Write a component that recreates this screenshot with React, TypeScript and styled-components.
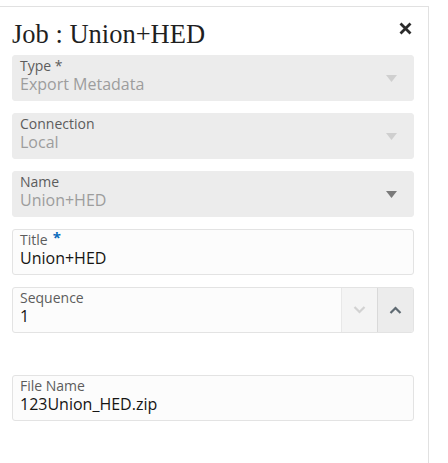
import * as React from "react";
import styled, { createGlobalStyle } from "styled-components";

const GlobalStyle = createGlobalStyle`
  html, body {
    margin: 0;
    padding: 0;
    background: #ffffff;
  }
  body {
    font-family: "Open Sans", "Noto Sans", sans-serif;
  }
`;

const Panel = styled.div`
  box-sizing: border-box;
  margin-top: 6px;
  width: 429px;
  min-height: 457px;
  border-top: 1px solid #e1e1e1;
  border-right: 1px solid #e1e1e1;
  padding: 12px 14px 0 12px;
`;

const Header = styled.div`
  display: flex;
  align-items: flex-start;
  justify-content: space-between;
  margin-bottom: 6px;
`;

const Heading = styled.h1`
  margin: 0;
  font-family: "Liberation Serif", "Times New Roman", serif;
  font-weight: 400;
  font-size: 26.5px;
  line-height: 30px;
  color: #1f1f1f;
`;

const CloseButton = styled.button`
  display: flex;
  align-items: center;
  justify-content: center;
  width: 18px;
  height: 18px;
  margin-top: 0;
  padding: 0;
  border: none;
  background: transparent;
  cursor: pointer;
`;

const Form = styled.div`
  display: flex;
  flex-direction: column;
  gap: 12px;
`;

const Field = styled.div<{ $disabled?: boolean; $spaceBefore?: number }>`
  box-sizing: border-box;
  display: flex;
  align-items: stretch;
  height: 46px;
  margin-top: ${(p) => p.$spaceBefore || 0}px;
  border-radius: 3px;
  border: 1px solid ${(p) => (p.$disabled ? "#ececec" : "#e3e3e3")};
  background: ${(p) => (p.$disabled ? "#ececec" : "#fcfcfc")};
  overflow: hidden;
`;

const FieldBody = styled.div`
  flex: 1;
  display: flex;
  flex-direction: column;
  padding: 1px 7px 0 7px;
`;

const Label = styled.div`
  font-size: 14px;
  line-height: 17px;
  color: #5c5c5c;
  white-space: nowrap;
`;

const Required = styled.span`
  display: inline-block;
  margin-left: 5px;
  color: #0b6bbd;
  font-weight: 700;
  font-size: 15px;
  line-height: 12px;
  vertical-align: top;
`;

const Value = styled.div<{ $muted?: boolean }>`
  font-size: 16px;
  line-height: 20px;
  color: ${(p) => (p.$muted ? "#9d9d9d" : "#161513")};
  white-space: nowrap;
`;

const CaretBox = styled.div`
  display: flex;
  align-items: center;
  justify-content: center;
  width: 36px;
  margin-right: 4px;
`;

const SpinButton = styled.div<{ $active?: boolean }>`
  display: flex;
  align-items: center;
  justify-content: center;
  width: 35px;
  border-left: 1px solid ${(p) => (p.$active ? "#d9d9d9" : "#e8e8e8")};
  background: ${(p) => (p.$active ? "#ececec" : "#f4f4f4")};
`;

const Caret = ({ color }: { color: string }) => (
  <svg width="11" height="7" viewBox="0 0 11 7">
    <path d="M0 0 L11 0 L5.5 7 Z" fill={color} />
  </svg>
);

const Chevron = ({ up, color }: { up?: boolean; color: string }) => (
  <svg width="13" height="8" viewBox="0 0 13 8">
    <path
      d={up ? "M1.5 7 L6.5 2 L11.5 7" : "M1.5 1 L6.5 6 L11.5 1"}
      fill="none"
      stroke={color}
      strokeWidth="2.2"
    />
  </svg>
);

type SelectProps = {
  label: string;
  value: string;
  caret: string;
  required?: boolean;
};

const SelectField = ({ label, value, caret, required }: SelectProps) => (
  <Field $disabled>
    <FieldBody>
      <Label>
        {label}
        {required && " *"}
      </Label>
      <Value $muted>{value}</Value>
    </FieldBody>
    <CaretBox>
      <Caret color={caret} />
    </CaretBox>
  </Field>
);

export default function App() {
  return (
    <>
      <GlobalStyle />
      <Panel>
        <Header>
          <Heading>Job : Union+HED</Heading>
          <CloseButton aria-label="Close">
            <svg width="13" height="13" viewBox="0 0 13 13">
              <path
                d="M1.5 1.5 L11.5 11.5 M11.5 1.5 L1.5 11.5"
                stroke="#2b2b2b"
                strokeWidth="2.8"
              />
            </svg>
          </CloseButton>
        </Header>
        <Form>
          <SelectField label="Type" required value="Export Metadata" caret="#cfcfcf" />
          <SelectField label="Connection" value="Local" caret="#cfcfcf" />
          <SelectField label="Name" value="Union+HED" caret="#7a7a7a" />
          <Field>
            <FieldBody>
              <Label>
                Title<Required>*</Required>
              </Label>
              <Value>Union+HED</Value>
            </FieldBody>
          </Field>
          <Field>
            <FieldBody>
              <Label>Sequence</Label>
              <Value>1</Value>
            </FieldBody>
            <SpinButton>
              <Chevron color="#d2d2d2" />
            </SpinButton>
            <SpinButton $active>
              <Chevron up color="#5f6a72" />
            </SpinButton>
          </Field>
          <Field $spaceBefore={30}>
            <FieldBody>
              <Label>File Name</Label>
              <Value>123Union_HED.zip</Value>
            </FieldBody>
          </Field>
        </Form>
      </Panel>
    </>
  );
}
